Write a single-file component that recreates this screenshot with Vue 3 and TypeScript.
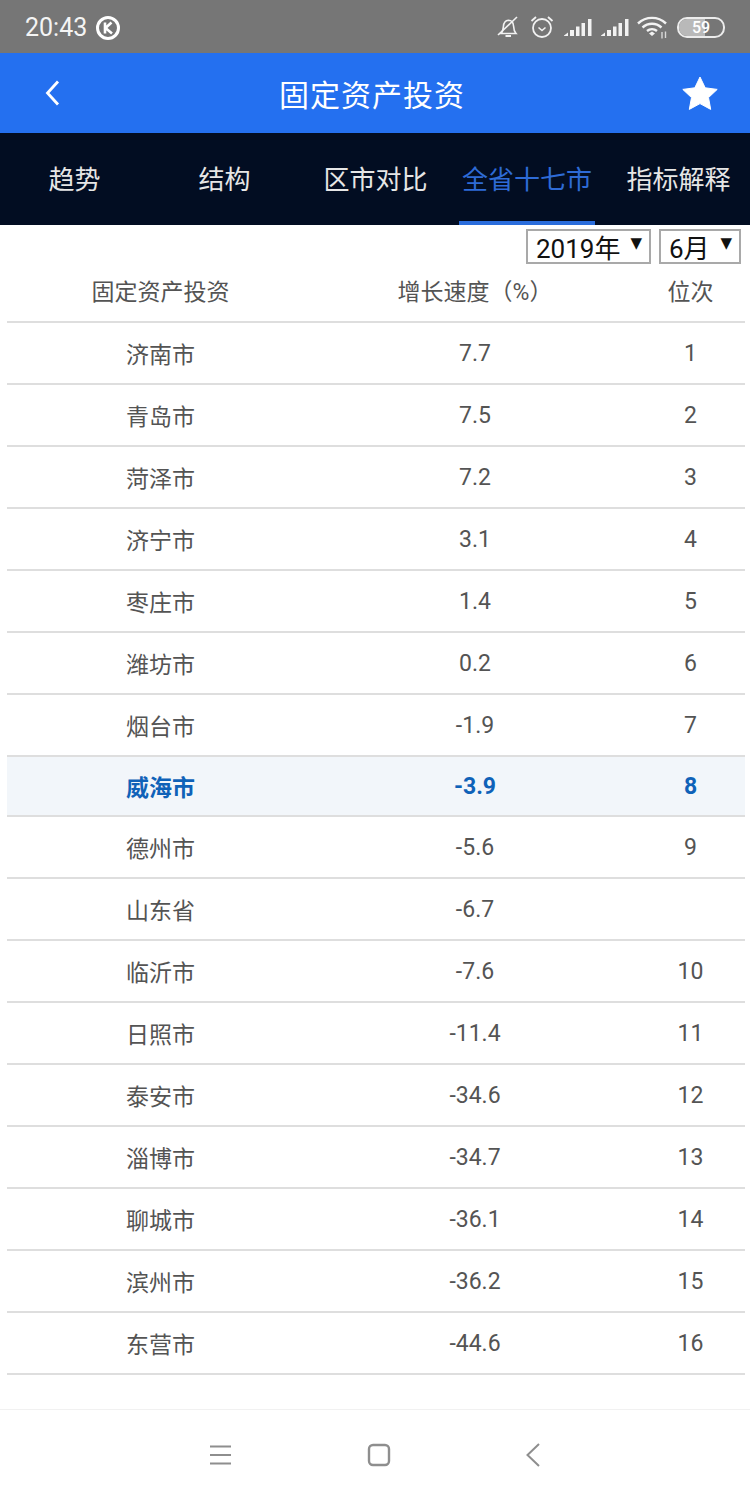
<template>
  <div class="page">
    <div class="status">
      <div class="status-left">
        <span class="time">20:43</span>
        <svg width="26" height="26" viewBox="0 0 26 26" class="k-icon">
          <circle cx="13" cy="13" r="10.5" fill="none" stroke="#fff" stroke-width="3" />
          <path d="M10 7.5v11M16.5 7.5L10.5 13l6.5 5.5" fill="none" stroke="#fff" stroke-width="2.6" />
        </svg>
      </div>
      <div class="status-right">
        <svg width="24" height="24" viewBox="0 0 24 24">
          <path d="M5 18.5c2-2 2.2-4 2.4-7 .3-3.5 2-6 5-6.200 3.300 0 5 2.600 5.200 6 .1 3 .6 5.200 2.400 7.200z" fill="none" stroke="#f2f2f2" stroke-width="1.600" />
          <path d="M9.500 21h5.500" stroke="#f2f2f2" stroke-width="2" />
          <path d="M2 20L21 2" stroke="#f2f2f2" stroke-width="1.600" />
        </svg>
        <svg width="26" height="26" viewBox="0 0 26 26">
          <circle cx="13" cy="14" r="9" fill="none" stroke="#f2f2f2" stroke-width="1.800" />
          <path d="M9.500 13.500l3.500 3 3.500-3" fill="none" stroke="#f2f2f2" stroke-width="1.600" />
          <path d="M2.500 7L7 3M19 3l4.500 4" stroke="#f2f2f2" stroke-width="1.800" />
        </svg>
        <svg v-for="n in 2" :key="n" width="28" height="20" viewBox="0 0 28 20">
          <path d="M0 18.500L4 15.500V19H0zM6 13h4v6H6zM12 9.500h3.500V19H12zM17.500 6H21v13h-3.500zM24 2h3.500v17H24z" fill="#f2f2f2" />
        </svg>
        <svg width="30" height="24" viewBox="0 0 30 24" class="wifi">
          <path d="M1 8.500C9 1 21 1 29 8.500M5.500 12.500C11 7.500 19 7.500 24.500 12.500M10 16c3-2.500 7-2.500 10 0" fill="none" stroke="#f2f2f2" stroke-width="2.400" />
          <path d="M12 18.500l3-2 3 2-3 2.500z" fill="#f2f2f2" />
          <path d="M25 17v6.500M28.500 16.500v6.500" stroke="#d8d8d8" stroke-width="1.400" />
        </svg>
        <div class="battery"><div class="battery-fill"></div><span>59</span></div>
      </div>
    </div>

    <header class="topbar">
      <svg class="back" width="18" height="28" viewBox="0 0 18 28">
        <path d="M14 2.500L3.500 14 14 25.500" fill="none" stroke="#fff" stroke-width="2.800" />
      </svg>
      <h1>固定资产投资</h1>
      <svg class="star" width="36" height="34" viewBox="0 0 36 34">
        <path d="M18 1l5.200 10.800 12 1.600-8.700 8.200 2.200 11.800L18 27.600 7.300 33.400l2.200-11.800L.8 13.400l12-1.600z" fill="#fff" stroke="#fff" stroke-linejoin="round" />
      </svg>
    </header>

    <nav class="tabs">
      <div v-for="(tab, i) in tabs" :key="tab" class="tab" :class="{ active: i === 3 }">{{ tab }}</div>
    </nav>

    <div class="filters">
      <div class="select year">2019年<span class="arrow">▼</span></div>
      <div class="select month">6月<span class="arrow">▼</span></div>
    </div>

    <div class="table">
      <div class="row head">
        <div>固定资产投资</div>
        <div>增长速度（%）</div>
        <div>位次</div>
      </div>
      <div v-for="row in rows" :key="row.city" class="row" :class="{ hl: row.city === '威海市' }">
        <div>{{ row.city }}</div>
        <div>{{ row.rate }}</div>
        <div>{{ row.rank }}</div>
      </div>
    </div>

    <div class="navbar">
      <svg width="24" height="20" viewBox="0 0 24 20">
        <path d="M1 1.500h21M1 10h21M1 18.500h21" stroke="#8e8e8e" stroke-width="2" />
      </svg>
      <svg width="24" height="24" viewBox="0 0 24 24">
        <rect x="2" y="2" width="20" height="20" rx="4" fill="none" stroke="#8e8e8e" stroke-width="2.400" />
      </svg>
      <svg width="16" height="24" viewBox="0 0 16 24">
        <path d="M14 1L2.500 12 14 23" fill="none" stroke="#8e8e8e" stroke-width="2" />
      </svg>
    </div>
  </div>
</template>

<script setup lang="ts">
const tabs = ['趋势', '结构', '区市对比', '全省十七市', '指标解释']

const rows = [
  { city: '济南市', rate: '7.7', rank: '1' },
  { city: '青岛市', rate: '7.5', rank: '2' },
  { city: '菏泽市', rate: '7.2', rank: '3' },
  { city: '济宁市', rate: '3.1', rank: '4' },
  { city: '枣庄市', rate: '1.4', rank: '5' },
  { city: '潍坊市', rate: '0.2', rank: '6' },
  { city: '烟台市', rate: '-1.9', rank: '7' },
  { city: '威海市', rate: '-3.9', rank: '8' },
  { city: '德州市', rate: '-5.6', rank: '9' },
  { city: '山东省', rate: '-6.7', rank: '' },
  { city: '临沂市', rate: '-7.6', rank: '10' },
  { city: '日照市', rate: '-11.4', rank: '11' },
  { city: '泰安市', rate: '-34.6', rank: '12' },
  { city: '淄博市', rate: '-34.7', rank: '13' },
  { city: '聊城市', rate: '-36.1', rank: '14' },
  { city: '滨州市', rate: '-36.2', rank: '15' },
  { city: '东营市', rate: '-44.6', rank: '16' },
]
</script>

<style>
body {
  margin: 0;
  background: #fff;
}
</style>

<style scoped>
.page {
  width: 750px;
  height: 1500px;
  overflow: hidden;
  background: #fff;
  font-family: Roboto, "Noto Sans CJK SC", sans-serif;
}

.status {
  height: 53px;
  background: #767676;
  display: flex;
  justify-content: space-between;
  align-items: center;
  color: #f4f4f4;
  box-sizing: border-box;
  padding: 2px 25px 0 25px;
}

.status-left {
  display: flex;
  align-items: center;
  gap: 8px;
}

.time {
  font-size: 25px;
}

.status-right {
  display: flex;
  align-items: center;
  gap: 9px;
  margin-top: -1px;
}

.wifi {
  margin-left: -1px;
}

.battery {
  position: relative;
  width: 44px;
  height: 17px;
  border: 2px solid #ececec;
  border-radius: 10px;
  overflow: hidden;
  margin-left: 1px;
}

.battery-fill {
  width: 60%;
  height: 100%;
  background: #b9b9b9;
}

.battery span {
  position: absolute;
  left: 0;
  right: 0;
  top: -2px;
  text-align: center;
  font-size: 16px;
  line-height: 21px;
  font-weight: 500;
  color: #fff;
}

.topbar {
  height: 80px;
  background: #2470f0;
  display: flex;
  align-items: center;
  justify-content: space-between;
  padding: 0 32px 0 44px;
}

.topbar h1 {
  margin: 0;
  font-size: 30px;
  font-weight: 400;
  letter-spacing: 1px;
  color: #fff;
}

.tabs {
  height: 92px;
  background: #020d22;
  display: flex;
}

.tab {
  flex: 0 0 151px;
  display: flex;
  align-items: center;
  justify-content: center;
  box-sizing: border-box;
  padding-bottom: 3px;
  font-size: 26px;
  color: #e6e6e6;
  white-space: nowrap;
}

.tab:nth-child(1) {
  flex-basis: 149px;
}

.tab.active {
  color: #2e6bd6;
  box-shadow: inset 0 -4px 0 #2a6ddc;
  flex-basis: 136px;
  margin: 0 8px 0 8px;
}

.filters {
  height: 40px;
  display: flex;
  justify-content: flex-end;
  gap: 8px;
  padding: 4px 9px 0 0;
  box-sizing: border-box;
}

.select {
  height: 35px;
  box-sizing: border-box;
  border: 2px solid #a9a9a9;
  display: flex;
  align-items: center;
  font-size: 26px;
  color: #111;
  padding-left: 8px;
  position: relative;
}

.year {
  width: 125px;
}

.month {
  width: 82px;
}

.arrow {
  position: absolute;
  right: 7px;
  top: 1px;
  font-size: 15px;
  line-height: 22px;
  font-family: "DejaVu Sans", sans-serif;
}

.table {
  margin: 0 5px 0 7px;
  margin-top: -4px;
}

.row {
  display: grid;
  grid-template-columns: 307px 322px 109px;
  height: 62px;
  box-sizing: border-box;
  border-bottom: 2px solid #dedede;
  align-items: center;
  text-align: center;
  font-size: 23px;
  color: #545454;
}

.row.head {
  height: 62px;
  padding-bottom: 3px;
}

.row.hl {
  background: #f2f6fa;
  color: #0f62b8;
  font-weight: 700;
  border-top: 2px solid #dedede;
  margin-top: -2px;
}

.navbar {
  margin-top: 34px;
  height: 90px;
  border-top: 1px solid #f1f1f1;
  display: flex;
  align-items: center;
  box-sizing: border-box;
  padding: 0 209px 0 209px;
  justify-content: space-between;
}
</style>
